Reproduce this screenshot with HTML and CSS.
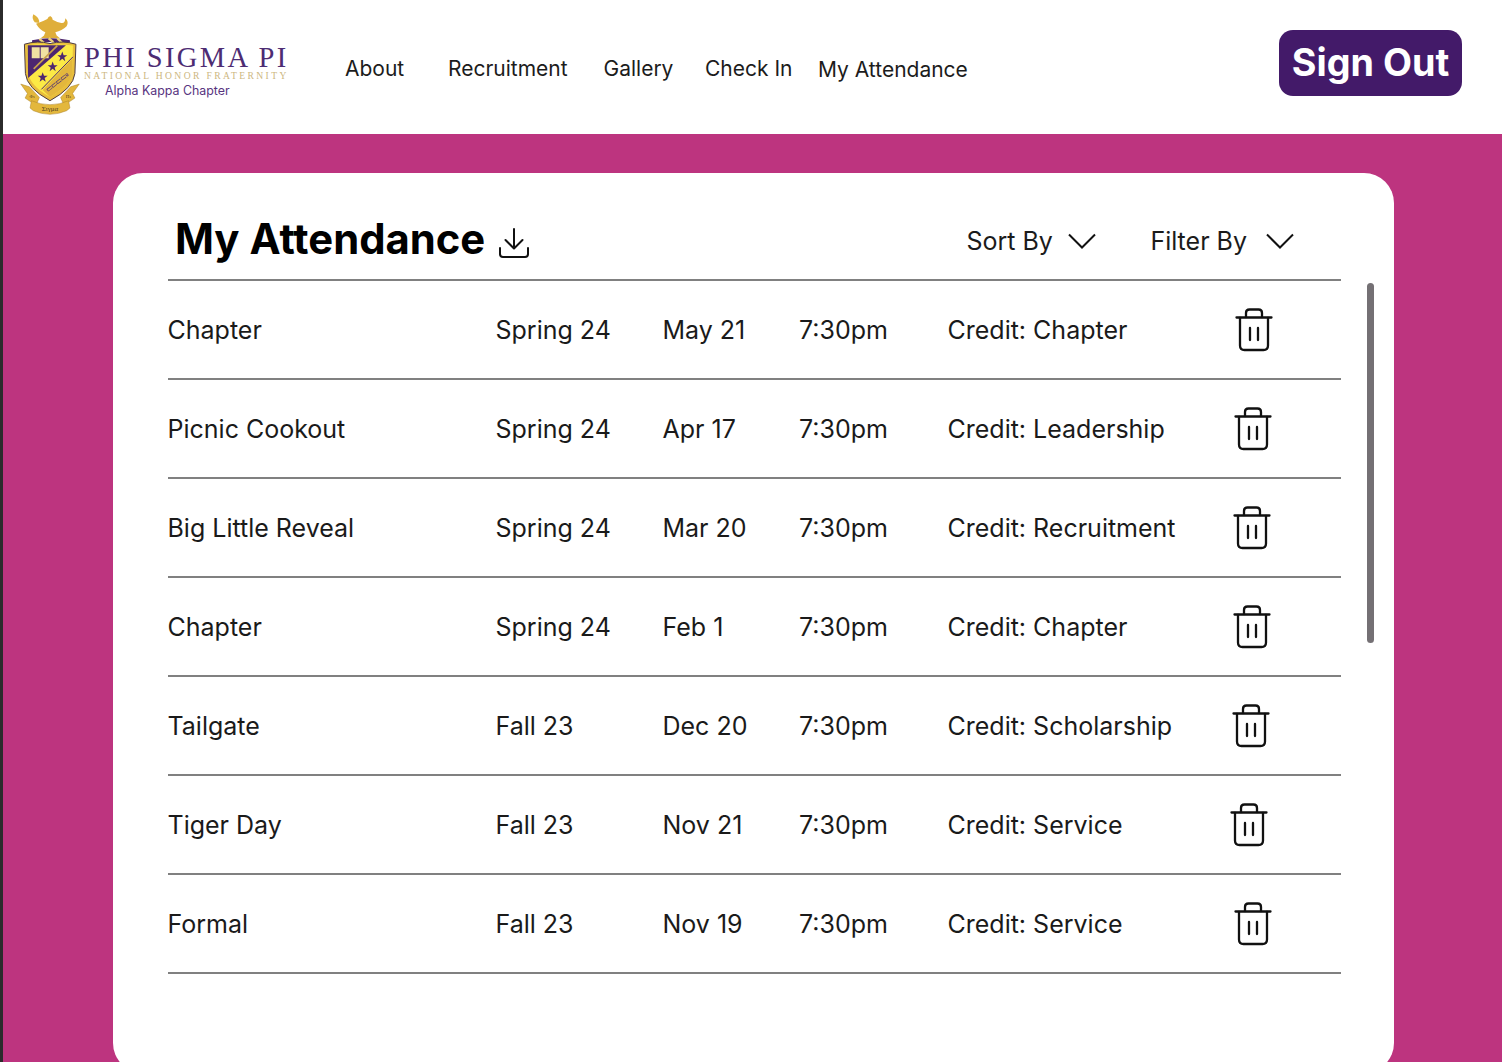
FILE: index.html
```html
<!DOCTYPE html>
<html lang="en">
<head>
<meta charset="utf-8">
<title>My Attendance</title>
<link rel="stylesheet" href="styles.css">
</head>
<body>
<svg class="defs" width="0" height="0" aria-hidden="true">
  <symbol id="trash" viewBox="0 0 38 44">
    <path d="M1.5 9.5H36.5" />
    <path d="M11 9V5Q11 1.5 14.5 1.5H23.5Q27 1.5 27 5V9" />
    <path d="M5 10V37.5Q5 42 9.5 42H28.5Q33 42 33 37.5V10" />
    <path d="M15 20V32M23 20V32" />
  </symbol>
</svg>
<header class="topbar">
  <div class="brand">
    <svg class="crest" viewBox="60 40 180 310" aria-hidden="true">
      <path d="M100 44Q122 56 116 70L104 68Q94 56 100 44Z" fill="#e0b23c"/>
      <path d="M108 72Q128 66 142 58Q146 48 152 50Q158 54 158 60Q172 68 184 70Q196 72 196 56Q208 66 200 80Q186 94 166 98L170 108L180 116H122L132 108L136 98Q120 92 108 72Z" fill="#dfae3a"/>
      <path d="M96 122Q150 110 210 122V132Q150 122 96 132Z" fill="#4d2670"/>
      <path d="M118 118L132 130M146 116L160 128M172 116L186 130" stroke="#ead27a" stroke-width="7"/>
      <path d="M73 134Q112 122 150 132Q190 122 228 134L225 222Q220 266 150 304Q80 266 76 222Z" fill="#e8bd3c" stroke="#4b3b45" stroke-width="3"/>
      <path d="M82 138Q116 130 150 138Q172 132 219 138L217 220Q212 256 150 293Q90 260 84 220Z" fill="#fcea45"/>
      <path d="M83 137H198L84 236Z" fill="#4d2670"/>
      <path d="M95 143H119V176H95ZM122 143H146V176H122Z" fill="#f1e2a2"/>
      <path d="M172 138L101 208" stroke="#c9a24a" stroke-width="5"/>
      <path d="M218 176V220Q212 256 150 293L128 272Z" fill="#e3b73c"/>
      <path d="M219 172L124 270" stroke="#4d2670" stroke-width="3"/>
      <path d="M187 156l4 11h11l-9 7 3 11-9-7-9 7 3-11-9-7h11zM158 186l4 11h11l-9 7 3 11-9-7-9 7 3-11-9-7h11zM128 218l4 11h11l-9 7 3 11-9-7-9 7 3-11-9-7h11z" fill="#4d2670"/>
      <path d="M142 273L204 224" stroke="#5a3a73" stroke-width="9" stroke-dasharray="16 2" fill="none"/>
      <path d="M144 272L202 225" stroke="#e3b73c" stroke-width="5" stroke-dasharray="14 4" fill="none"/>
      <path d="M62 254L88 262L118 294L108 318L75 296L82 282Z" fill="#e3b73c" stroke="#a9822c" stroke-width="1.500"/>
      <path d="M238 254L212 262L182 294L192 318L225 296L218 282Z" fill="#e3b73c" stroke="#a9822c" stroke-width="1.500"/>
      <path d="M94 304Q150 328 206 304L210 326L200 334Q150 356 100 334L90 326Z" fill="#e3b73c" stroke="#a9822c" stroke-width="1.500"/>
      <text class="crest-greek" x="150" y="336" text-anchor="middle">Σιγμα</text>
      <text class="crest-greek small" x="96" y="296" text-anchor="middle">Φι</text>
      <text class="crest-greek small" x="205" y="296" text-anchor="middle">Πι</text>
    </svg>
    <div class="brand-text">
      <div class="brand-name">PHI SIGMA PI</div>
      <div class="brand-sub">NATIONAL HONOR FRATERNITY</div>
      <div class="brand-chapter">Alpha Kappa Chapter</div>
    </div>
  </div>
  <nav class="nav">
    <a class="nav-about">About</a>
    <a class="nav-recruit">Recruitment</a>
    <a class="nav-gallery">Gallery</a>
    <a class="nav-check">Check In</a>
    <a class="nav-mine">My Attendance</a>
  </nav>
  <button class="signout">Sign Out</button>
</header>
<main class="stage">
  <section class="card">
    <div class="card-head">
      <div class="title-wrap">
        <h1>My Attendance</h1>
        <svg class="download" viewBox="0 0 32 32" aria-hidden="true">
          <path d="M16 2V21M7.500 13L16 21.500 24.500 13M2 21V27Q2 30 5 30H27Q30 30 30 27V21"/>
        </svg>
      </div>
      <div class="controls">
        <span class="control sort">Sort By<svg viewBox="0 0 28 16" aria-hidden="true"><path d="M1 1.500L14 14.500 27 1.500"/></svg></span>
        <span class="control filter">Filter By<svg viewBox="0 0 28 16" aria-hidden="true"><path d="M1 1.500L14 14.500 27 1.500"/></svg></span>
      </div>
    </div>
    <div class="scrollbar"></div>
    <ul class="rows">
      <li class="row"><span>Chapter</span><span>Spring 24</span><span>May 21</span><span>7:30pm</span><span>Credit: Chapter</span><svg class="trash t0"><use href="#trash"/></svg></li>
      <li class="row"><span>Picnic Cookout</span><span>Spring 24</span><span>Apr 17</span><span>7:30pm</span><span>Credit: Leadership</span><svg class="trash t1"><use href="#trash"/></svg></li>
      <li class="row"><span>Big Little Reveal</span><span>Spring 24</span><span>Mar 20</span><span>7:30pm</span><span>Credit: Recruitment</span><svg class="trash t2"><use href="#trash"/></svg></li>
      <li class="row"><span>Chapter</span><span>Spring 24</span><span>Feb 1</span><span>7:30pm</span><span>Credit: Chapter</span><svg class="trash t2"><use href="#trash"/></svg></li>
      <li class="row"><span>Tailgate</span><span>Fall 23</span><span>Dec 20</span><span>7:30pm</span><span>Credit: Scholarship</span><svg class="trash t3"><use href="#trash"/></svg></li>
      <li class="row"><span>Tiger Day</span><span>Fall 23</span><span>Nov 21</span><span>7:30pm</span><span>Credit: Service</span><svg class="trash t4"><use href="#trash"/></svg></li>
      <li class="row"><span>Formal</span><span>Fall 23</span><span>Nov 19</span><span>7:30pm</span><span>Credit: Service</span><svg class="trash t1"><use href="#trash"/></svg></li>
    </ul>
  </section>
</main>
</body>
</html>
```
FILE: styles.css
```css
* { box-sizing: border-box; }
html, body { margin: 0; height: 100%; overflow: hidden; }
body {
  width: 1502px;
  height: 1062px;
  font-family: Inter, "Liberation Sans", sans-serif;
  background: #fff;
  color: #111;
  border-left: 3px solid #2b2b2b;
}
.defs { position: absolute; }
.topbar {
  height: 134px;
  background: #fff;
  display: flex;
  align-items: flex-start;
  position: relative;
}
.brand { display: flex; margin: 13px 0 0 17px; width: 325px; }
.crest { width: 60px; height: 103px; flex: none; }
.crest-greek { font-family: "Liberation Serif", serif; font-size: 21px; fill: #4d3a20; }
.crest-greek.small { font-size: 15px; }
.brand-text { margin: 31px 0 0 4px; }
.brand-name {
  font-family: "Liberation Serif", serif;
  font-size: 28.500px;
  line-height: 28px;
  letter-spacing: 2.400px;
  color: #4d2c73;
  white-space: nowrap;
}
.brand-sub {
  font-family: "Liberation Serif", serif;
  font-size: 9.600px;
  line-height: 10px;
  letter-spacing: 2.360px;
  margin-top: -1px;
  color: #cdb77f;
  white-space: nowrap;
}
.brand-chapter {
  font-size: 12.400px;
  line-height: 16px;
  margin: 2px 0 0 21px;
  color: #58347f;
  white-space: nowrap;
}
.nav { display: flex; font-size: 21px; color: #1c1c1c; margin-top: 54px; }
.nav a { line-height: 30px; white-space: nowrap; }
.nav-about { width: 103px; }
.nav-recruit { width: 155.500px; }
.nav-gallery { width: 101.500px; }
.nav-check { width: 113px; }
.nav-mine { margin-top: 1px; }
.signout {
  position: absolute;
  left: 1276px;
  top: 30px;
  width: 183px;
  height: 66px;
  border: 0;
  border-radius: 14px;
  background: #431a69;
  color: #fff;
  font: 700 37.700px Inter, "Liberation Sans", sans-serif;
  padding: 0 0 2px;
}
.stage {
  height: 928px;
  background: #bd347f;
  padding: 39px 0 0 110px;
  overflow: hidden;
}
.card {
  position: relative;
  width: 1281px;
  height: 900px;
  background: #fff;
  border-radius: 30px;
  padding: 0 53px 0 55px;
}
.card-head {
  height: 106px;
  display: flex;
  justify-content: space-between;
  align-items: flex-start;
  padding: 38px 0 0 7px;
}
.title-wrap { display: flex; align-items: flex-start; }
h1 {
  margin: 0;
  font-size: 41.800px;
  line-height: 56px;
  font-weight: 700;
  color: #000;
}
.download {
  width: 32px;
  height: 32px;
  margin: 16px 0 0 13px;
  fill: none;
  stroke: #111;
  stroke-width: 2;
  stroke-linecap: round;
  stroke-linejoin: round;
}
.controls { display: flex; margin: 10px 47px 0 0; font-size: 25px; color: #1b1b1b; }
.control { display: flex; align-items: center; line-height: 40px; }
.control svg { width: 28px; height: 16px; fill: none; stroke: #111; stroke-width: 2; }
.sort { width: 184px; }
.sort svg { margin-left: 15px; }
.filter svg { margin-left: 19px; }
.scrollbar {
  position: absolute;
  right: 20px;
  top: 110px;
  width: 7px;
  height: 360px;
  border-radius: 4px;
  background: #747074;
}
.rows { list-style: none; margin: 0; padding: 0; border-top: 2px solid #808080; }
.row {
  height: 99px;
  display: grid;
  grid-template-columns: 328px 167px 136.500px 148.500px 1fr;
  align-items: center;
  padding-top: 1px;
  font-size: 25px;
  color: #1a1a1a;
  border-bottom: 2px solid #808080;
  position: relative;
}
.row span { white-space: nowrap; margin-left: -0.500px; }
.trash {
  position: absolute;
  top: 27px;
  width: 38px;
  height: 44px;
  fill: none;
  stroke: #111;
  stroke-width: 2.300;
  stroke-linecap: round;
  stroke-linejoin: round;
}
.t0 { left: 1067px; }
.t1 { left: 1066px; }
.t2 { left: 1065px; }
.t3 { left: 1064px; }
.t4 { left: 1062px; }
```
